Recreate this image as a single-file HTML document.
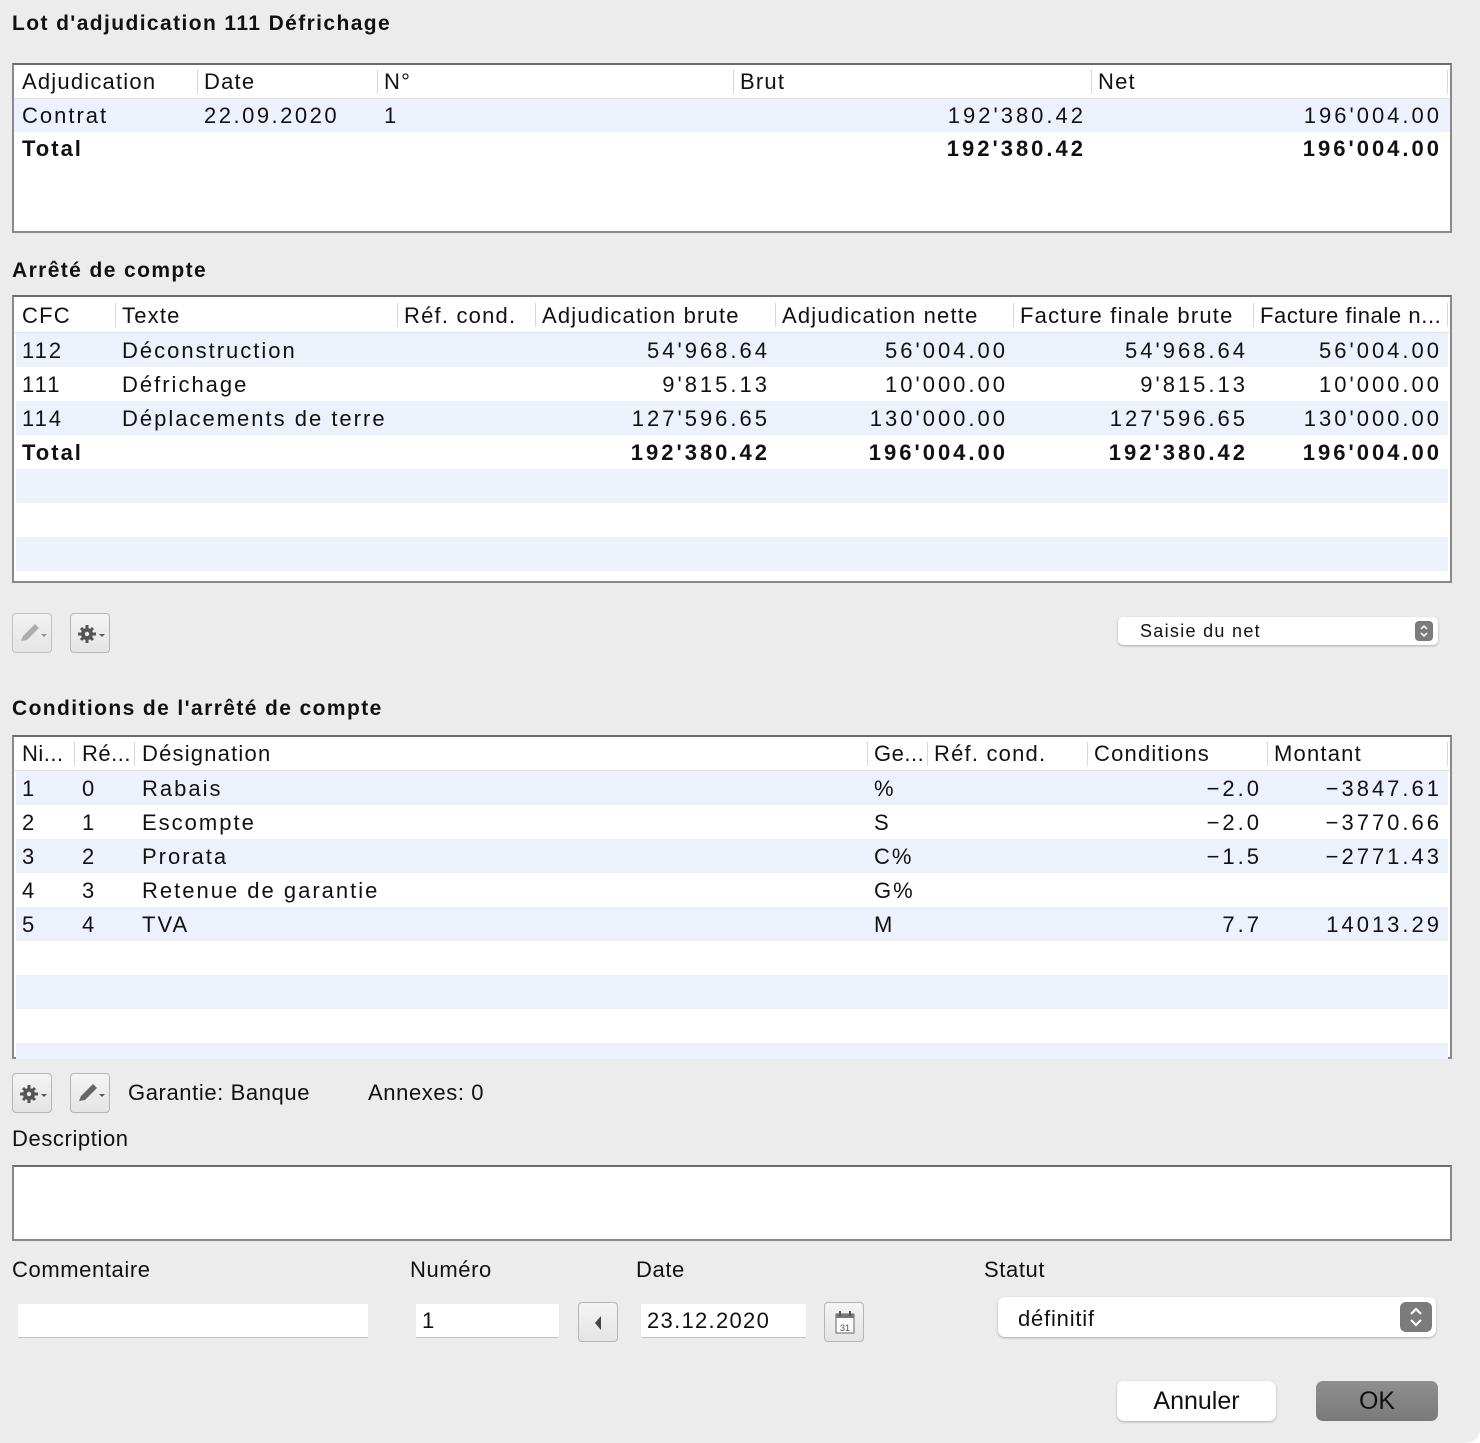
<!DOCTYPE html>
<html><head><meta charset="utf-8"><style>
*{margin:0;padding:0;box-sizing:border-box}
body{width:1480px;height:1443px;background:#fff;font-family:"Liberation Sans",sans-serif;color:#111;position:relative;overflow:hidden}
#win{position:absolute;left:0;top:0;width:1480px;height:1443px;background:#ececec;border-bottom-right-radius:14px}
.a{position:absolute}
.h{font-weight:bold;font-size:21px;letter-spacing:1.4px}
.box{position:absolute;background:#fff;border:2px solid #8a8a8a;border-top-color:#6a6a6a}
.c{position:absolute;height:34px;line-height:34px;font-size:22px;white-space:nowrap;overflow:hidden;letter-spacing:2px}
.hc{letter-spacing:1.2px}
.r{text-align:right;letter-spacing:3px}
.b{font-weight:bold}
.sep{position:absolute;width:1px;height:24px;background:#d8d8d8}
.hd{position:absolute;left:0;right:0;height:34px;border-bottom:1px solid #e2e2e2;background:#fff}
.st{position:absolute;left:2px;right:2px;height:34px;background:#edf1fb}
.btn{position:absolute;width:40px;height:40px;border:1px solid #b5b5b5;border-radius:4px;background:linear-gradient(#f4f4f4,#e4e4e4)}
.fld{position:absolute;background:#fff;border-bottom:1px solid #c4c4c4;height:34px;font-size:22px;line-height:34px;padding-left:6px;letter-spacing:1.3px}
.lbl{position:absolute;font-size:22px;letter-spacing:0.6px}
</style></head><body><div id="win">

<div class="a h" style="left:12px;top:12px">Lot d'adjudication 111 Défrichage</div>
<div class="box" style="left:12px;top:63px;width:1440px;height:170px">
 <div class="hd" style="top:0"></div>
 <div class="st" style="top:34px;left:0;right:0;height:33px"></div>
 <div class="sep" style="left:183px;top:5px"></div><div class="sep" style="left:363px;top:5px"></div><div class="sep" style="left:719px;top:5px"></div><div class="sep" style="left:1077px;top:5px"></div><div class="sep" style="left:1433px;top:5px"></div>
 <div class="c hc" style="left:8px;top:0">Adjudication</div><div class="c hc" style="left:190px;top:0">Date</div><div class="c hc" style="left:370px;top:0">N°</div><div class="c hc" style="left:726px;top:0">Brut</div><div class="c hc" style="left:1084px;top:0">Net</div>
 <div class="c" style="left:8px;top:34px">Contrat</div><div class="c" style="left:190px;top:34px;letter-spacing:2.5px">22.09.2020</div><div class="c" style="left:370px;top:34px">1</div>
 <div class="c r" style="left:726px;width:346px;top:34px">192'380.42</div><div class="c r" style="left:1084px;width:344px;top:34px">196'004.00</div>
 <div class="c b" style="left:8px;top:67px">Total</div>
 <div class="c r b" style="left:726px;width:346px;top:67px">192'380.42</div><div class="c r b" style="left:1084px;width:344px;top:67px">196'004.00</div>
</div>

<div class="a h" style="left:12px;top:259px">Arrêté de compte</div>
<div class="box" style="left:12px;top:295px;width:1440px;height:288px">
 <div class="hd" style="top:0;height:36px"></div>
 <div class="st" style="top:36px"></div><div class="st" style="top:104px"></div><div class="st" style="top:172px"></div><div class="st" style="top:240px"></div>
 <div class="sep" style="left:101px;top:6px"></div><div class="sep" style="left:383px;top:6px"></div><div class="sep" style="left:521px;top:6px"></div><div class="sep" style="left:761px;top:6px"></div><div class="sep" style="left:999px;top:6px"></div><div class="sep" style="left:1239px;top:6px"></div><div class="sep" style="left:1433px;top:6px"></div>
 <div class="c hc" style="left:8px;top:2px">CFC</div><div class="c hc" style="left:108px;top:2px">Texte</div><div class="c hc" style="left:390px;top:2px">Réf. cond.</div><div class="c hc" style="left:528px;top:2px">Adjudication brute</div><div class="c hc" style="left:768px;top:2px">Adjudication nette</div><div class="c hc" style="left:1006px;top:2px">Facture finale brute</div><div class="c hc" style="left:1246px;top:2px;width:186px;letter-spacing:0.6px">Facture finale n...</div>

 <div class="c" style="left:8px;top:37px">112</div><div class="c" style="left:108px;top:37px">Déconstruction</div>
 <div class="c r" style="left:528px;width:228px;top:37px">54'968.64</div><div class="c r" style="left:768px;width:226px;top:37px">56'004.00</div><div class="c r" style="left:1006px;width:228px;top:37px">54'968.64</div><div class="c r" style="left:1246px;width:182px;top:37px">56'004.00</div>
 <div class="c" style="left:8px;top:71px">111</div><div class="c" style="left:108px;top:71px">Défrichage</div>
 <div class="c r" style="left:528px;width:228px;top:71px">9'815.13</div><div class="c r" style="left:768px;width:226px;top:71px">10'000.00</div><div class="c r" style="left:1006px;width:228px;top:71px">9'815.13</div><div class="c r" style="left:1246px;width:182px;top:71px">10'000.00</div>
 <div class="c" style="left:8px;top:105px">114</div><div class="c" style="left:108px;top:105px">Déplacements de terre</div>
 <div class="c r" style="left:528px;width:228px;top:105px">127'596.65</div><div class="c r" style="left:768px;width:226px;top:105px">130'000.00</div><div class="c r" style="left:1006px;width:228px;top:105px">127'596.65</div><div class="c r" style="left:1246px;width:182px;top:105px">130'000.00</div>
 <div class="c b" style="left:8px;top:139px">Total</div>
 <div class="c r b" style="left:528px;width:228px;top:139px">192'380.42</div><div class="c r b" style="left:768px;width:226px;top:139px">196'004.00</div><div class="c r b" style="left:1006px;width:228px;top:139px">192'380.42</div><div class="c r b" style="left:1246px;width:182px;top:139px">196'004.00</div>
</div>

<div class="btn" style="left:12px;top:613px;opacity:.75"><svg width="40" height="40"><path d="M8 27 L10 22 L22 10 L26 14 L14 26 Z" fill="#999"/><path d="M28 20 l3 3 l3 -3z" fill="#777"/></svg></div>
<div class="btn" style="left:70px;top:613px"><svg width="40" height="40"><circle cx="16" cy="20" r="6" fill="#555"/><g stroke="#555" stroke-width="3"><path d="M16 11v18M7 20h18M10 14l12 12M22 14l-12 12"/></g><circle cx="16" cy="20" r="2.2" fill="#eee"/><path d="M28 20 l3 3 l3 -3z" fill="#555"/></svg></div>
<div class="a" style="left:1118px;top:617px;width:320px;height:28px;background:#fff;border-radius:5px;box-shadow:0 1px 2px #aaa;font-size:18px;line-height:28px;padding-left:22px;letter-spacing:1.3px">Saisie du net<div class="a" style="right:5px;top:4px;width:18px;height:20px;background:#7b7b7b;border-radius:4px"><svg width="18" height="20"><path d="M6 8l3-3 3 3M6 12l3 3 3-3" stroke="#fff" stroke-width="1.5" fill="none"/></svg></div></div>

<div class="a h" style="left:12px;top:697px">Conditions de l'arrêté de compte</div>
<div class="box" style="left:12px;top:735px;width:1440px;height:324px">
 <div class="hd" style="top:0"></div>
 <div class="st" style="top:34px"></div><div class="st" style="top:102px"></div><div class="st" style="top:170px"></div><div class="st" style="top:238px"></div><div class="st" style="top:306px;height:16px"></div>
 <div class="sep" style="left:60px;top:5px"></div><div class="sep" style="left:120px;top:5px"></div><div class="sep" style="left:853px;top:5px"></div><div class="sep" style="left:913px;top:5px"></div><div class="sep" style="left:1073px;top:5px"></div><div class="sep" style="left:1253px;top:5px"></div><div class="sep" style="left:1433px;top:5px"></div>
 <div class="c hc" style="left:8px;top:0;letter-spacing:0.5px">Ni...</div><div class="c hc" style="left:68px;top:0;letter-spacing:0.5px">Ré...</div><div class="c hc" style="left:128px;top:0">Désignation</div><div class="c hc" style="left:860px;top:0;letter-spacing:0.5px">Ge...</div><div class="c hc" style="left:920px;top:0">Réf. cond.</div><div class="c hc" style="left:1080px;top:0">Conditions</div><div class="c hc" style="left:1260px;top:0">Montant</div>

 <div class="c" style="left:8px;top:35px">1</div><div class="c" style="left:68px;top:35px">0</div><div class="c" style="left:128px;top:35px">Rabais</div><div class="c" style="left:860px;top:35px">%</div><div class="c r" style="left:1080px;width:168px;top:35px">−2.0</div><div class="c r" style="left:1260px;width:168px;top:35px">−3847.61</div>
 <div class="c" style="left:8px;top:69px">2</div><div class="c" style="left:68px;top:69px">1</div><div class="c" style="left:128px;top:69px">Escompte</div><div class="c" style="left:860px;top:69px">S</div><div class="c r" style="left:1080px;width:168px;top:69px">−2.0</div><div class="c r" style="left:1260px;width:168px;top:69px">−3770.66</div>
 <div class="c" style="left:8px;top:103px">3</div><div class="c" style="left:68px;top:103px">2</div><div class="c" style="left:128px;top:103px">Prorata</div><div class="c" style="left:860px;top:103px">C%</div><div class="c r" style="left:1080px;width:168px;top:103px">−1.5</div><div class="c r" style="left:1260px;width:168px;top:103px">−2771.43</div>
 <div class="c" style="left:8px;top:137px">4</div><div class="c" style="left:68px;top:137px">3</div><div class="c" style="left:128px;top:137px">Retenue de garantie</div><div class="c" style="left:860px;top:137px">G%</div>
 <div class="c" style="left:8px;top:171px">5</div><div class="c" style="left:68px;top:171px">4</div><div class="c" style="left:128px;top:171px">TVA</div><div class="c" style="left:860px;top:171px">M</div><div class="c r" style="left:1080px;width:168px;top:171px">7.7</div><div class="c r" style="left:1260px;width:168px;top:171px">14013.29</div>
</div>

<div class="btn" style="left:12px;top:1073px"><svg width="40" height="40"><circle cx="16" cy="20" r="6" fill="#555"/><g stroke="#555" stroke-width="3"><path d="M16 11v18M7 20h18M10 14l12 12M22 14l-12 12"/></g><circle cx="16" cy="20" r="2.2" fill="#eee"/><path d="M28 20 l3 3 l3 -3z" fill="#555"/></svg></div>
<div class="btn" style="left:70px;top:1073px"><svg width="40" height="40"><path d="M8 27 L10 22 L22 10 L26 14 L14 26 Z" fill="#666"/><path d="M28 20 l3 3 l3 -3z" fill="#555"/></svg></div>
<div class="lbl" style="left:128px;top:1080px">Garantie: Banque</div>
<div class="lbl" style="left:368px;top:1080px">Annexes: 0</div>
<div class="lbl" style="left:12px;top:1126px">Description</div>
<div class="box" style="left:12px;top:1165px;width:1440px;height:76px"></div>

<div class="lbl" style="left:12px;top:1257px">Commentaire</div>
<div class="lbl" style="left:410px;top:1257px">Numéro</div>
<div class="lbl" style="left:636px;top:1257px">Date</div>
<div class="lbl" style="left:984px;top:1257px">Statut</div>
<div class="fld" style="left:18px;top:1304px;width:350px"></div>
<div class="fld" style="left:416px;top:1304px;width:143px">1</div>
<div class="btn" style="left:578px;top:1302px;height:40px"><svg width="40" height="40"><path d="M22 13 L16 20 L22 27Z" fill="#444"/></svg></div>
<div class="fld" style="left:641px;top:1304px;width:165px">23.12.2020</div>
<div class="btn" style="left:824px;top:1302px;height:40px"><svg width="40" height="40"><rect x="11" y="11" width="18" height="19" fill="#fafafa" stroke="#666"/><rect x="11" y="11" width="18" height="4" fill="#777"/><path d="M15 8v5M25 8v5" stroke="#555" stroke-width="2"/><text x="20" y="28" font-size="9" text-anchor="middle" fill="#555" font-family="Liberation Sans">31</text></svg></div>
<div class="a" style="left:998px;top:1297px;width:438px;height:40px;background:#fff;border-radius:7px;box-shadow:0 1px 2px #aaa;font-size:22px;line-height:44px;padding-left:20px;letter-spacing:0.8px">définitif<div class="a" style="right:4px;top:5px;width:32px;height:30px;background:#7b7b7b;border-radius:6px"><svg width="32" height="30"><path d="M11 12l5-5 5 5M11 18l5 5 5-5" stroke="#fff" stroke-width="2.2" fill="none"/></svg></div></div>

<div class="a" style="left:1117px;top:1381px;width:159px;height:40px;background:#fff;border-radius:7px;box-shadow:0 1px 2px #aaa;font-size:25px;line-height:40px;text-align:center">Annuler</div>
<div class="a" style="left:1316px;top:1381px;width:122px;height:40px;background:linear-gradient(#8f8f8f,#7a7a7a);border-radius:7px;font-size:25px;line-height:40px;text-align:center">OK</div>
</div></body></html>
